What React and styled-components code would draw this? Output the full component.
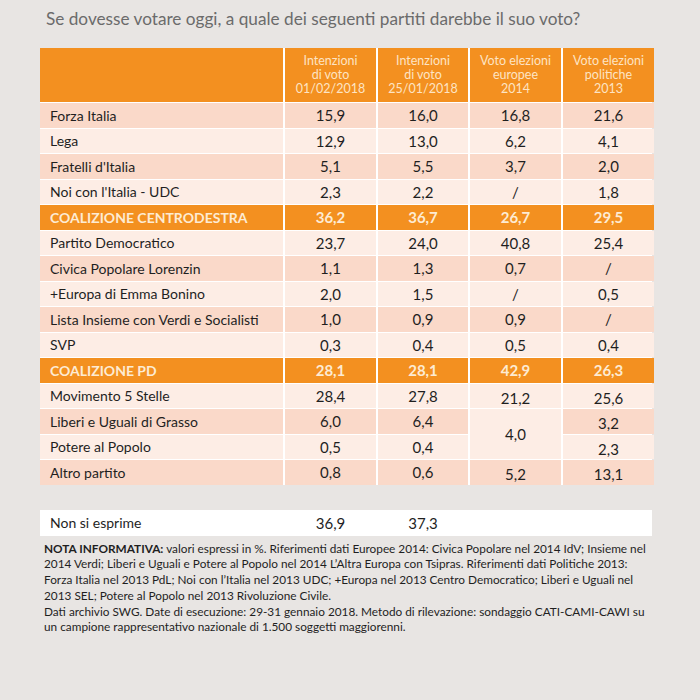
import React from "react";
import styled, { createGlobalStyle } from "styled-components";

const GlobalStyle = createGlobalStyle`
  html, body {
    margin: 0;
    padding: 0;
    background: #e8e5e3;
  }
  body {
    font-family: Lato, "Open Sans", sans-serif;
  }
`;

const Page = styled.div`
  width: 700px;
  height: 700px;
  box-sizing: border-box;
  padding: 9px 48px 0 40px;
  background: #e8e5e3;
`;

const Title = styled.h1`
  margin: 0 0 19px 6px;
  font-size: 17.2px;
  font-weight: 400;
  line-height: 20px;
  color: #6b6b6b;
`;

const Table = styled.div`
  display: grid;
  grid-template-columns: 243px 91px 90px 91px 91px;
  grid-template-rows: 54px;
  grid-auto-rows: 24.5px;
  column-gap: 2px;
  row-gap: 1px;
  background: #ffffff;
  width: 612px;
`;

const HeadCell = styled.div`
  background: #f39020;
  color: #fde4c4;
  font-size: 12.5px;
  line-height: 14px;
  text-align: center;
  display: flex;
  align-items: center;
  justify-content: center;
`;

const tones = {
  dark: "#fad9c9",
  light: "#fdede5",
  total: "#f39020",
};

const Cell = styled.div`
  background: ${(p) => tones[p.$tone]};
  color: ${(p) => (p.$tone === "total" ? "#fdebd3" : "#1f1f1f")};
  font-weight: ${(p) => (p.$tone === "total" ? 700 : 400)};
  font-size: ${(p) => (p.$name ? "14px" : "15px")};
  display: flex;
  align-items: center;
  justify-content: ${(p) => (p.$name ? "flex-start" : "center")};
  padding: ${(p) => (p.$name ? "0 0 0 10px" : "0")};
  padding-top: ${(p) => p.$shift || 0}px;
  grid-row: ${(p) => (p.$span ? `span ${p.$span}` : "auto")};
`;

const Abstain = styled.div`
  display: grid;
  grid-template-columns: 243px 91px 90px 182px;
  column-gap: 2px;
  height: 26px;
  width: 612px;
  margin-top: 25px;
  background: #ffffff;
  align-items: center;
  font-size: 15px;
  color: #1f1f1f;
`;

const AbstainName = styled.span`
  padding-left: 10px;
  font-size: 14px;
`;

const AbstainValue = styled.span`
  text-align: center;
`;

const Note = styled.p`
  margin: 5px 0 0 4px;
  font-size: 11.8px;
  line-height: 15.8px;
  color: #1f1f1f;
  b {
    font-weight: 700;
  }
`;

const rows = [
  { name: "Forza Italia", tone: "dark", values: ["15,9", "16,0", "16,8", "21,6"] },
  { name: "Lega", tone: "light", values: ["12,9", "13,0", "6,2", "4,1"] },
  { name: "Fratelli d'Italia", tone: "dark", values: ["5,1", "5,5", "3,7", "2,0"] },
  { name: "Noi con l'Italia - UDC", tone: "light", values: ["2,3", "2,2", "/", "1,8"] },
  { name: "COALIZIONE CENTRODESTRA", tone: "total", values: ["36,2", "36,7", "26,7", "29,5"] },
  { name: "Partito Democratico", tone: "light", values: ["23,7", "24,0", "40,8", "25,4"] },
  { name: "Civica Popolare Lorenzin", tone: "dark", values: ["1,1", "1,3", "0,7", "/"] },
  { name: "+Europa di Emma Bonino", tone: "light", values: ["2,0", "1,5", "/", "0,5"] },
  { name: "Lista Insieme con Verdi e Socialisti", tone: "dark", values: ["1,0", "0,9", "0,9", "/"] },
  { name: "SVP", tone: "light", values: ["0,3", "0,4", "0,5", "0,4"] },
  { name: "COALIZIONE PD", tone: "total", values: ["28,1", "28,1", "42,9", "26,3"] },
  { name: "Movimento 5 Stelle", tone: "light", values: ["28,4", "27,8", "21,2", "25,6"], shift: [0, -2, 4, 4] },
  { name: "Liberi e Uguali di Grasso", tone: "dark", values: ["6,0", "6,4", "4,0", "3,2"], shift: [0, -2, 0, 4], span: 2, spanTone: "light" },
  { name: "Potere al Popolo", tone: "light", values: ["0,5", "0,4", null, "2,3"], shift: [0, -2, 0, 4] },
  { name: "Altro partito", tone: "dark", values: ["0,8", "0,6", "5,2", "13,1"], shift: [0, -2, 4, 4] },
];

const headers = [
  ["Intenzioni", "di voto", "01/02/2018"],
  ["Intenzioni", "di voto", "25/01/2018"],
  ["Voto elezioni", "europee", "2014"],
  ["Voto elezioni", "politiche", "2013"],
];

const App = () => {
  return (
    <Page>
      <GlobalStyle />
      <Title>Se dovesse votare oggi, a quale dei seguenti partiti darebbe il suo voto?</Title>
      <Table>
        <HeadCell />
        {headers.map((lines, i) => (
          <HeadCell key={i}>
            {lines[0]}
            <br />
            {lines[1]}
            <br />
            {lines[2]}
          </HeadCell>
        ))}
        {rows.map((row) => (
          <React.Fragment key={row.name}>
            <Cell $tone={row.tone} $name>
              {row.name}
            </Cell>
            {row.values.map((v, i) =>
              v === null ? null : (
                <Cell
                  key={i}
                  $tone={row.span && i === 2 ? row.spanTone : row.tone}
                  $span={row.span && i === 2 ? row.span : 0}
                  $shift={row.shift ? row.shift[i] : 0}
                >
                  {v}
                </Cell>
              )
            )}
          </React.Fragment>
        ))}
      </Table>
      <Abstain>
        <AbstainName>Non si esprime</AbstainName>
        <AbstainValue>36,9</AbstainValue>
        <AbstainValue>37,3</AbstainValue>
      </Abstain>
      <Note>
        <b>NOTA INFORMATIVA:</b> valori espressi in %. Riferimenti dati Europee 2014: Civica Popolare nel 2014 IdV; Insieme nel
        <br />
        2014 Verdi; Liberi e Uguali e Potere al Popolo nel 2014 L’Altra Europa con Tsipras. Riferimenti dati Politiche 2013:
        <br />
        Forza Italia nel 2013 PdL; Noi con l’Italia nel 2013 UDC; +Europa nel 2013 Centro Democratico; Liberi e Uguali nel
        <br />
        2013 SEL; Potere al Popolo nel 2013 Rivoluzione Civile.
        <br />
        Dati archivio SWG. Date di esecuzione: 29-31 gennaio 2018. Metodo di rilevazione: sondaggio CATI-CAMI-CAWI su
        <br />
        un campione rappresentativo nazionale di 1.500 soggetti maggiorenni.
      </Note>
    </Page>
  );
};

export default App;
